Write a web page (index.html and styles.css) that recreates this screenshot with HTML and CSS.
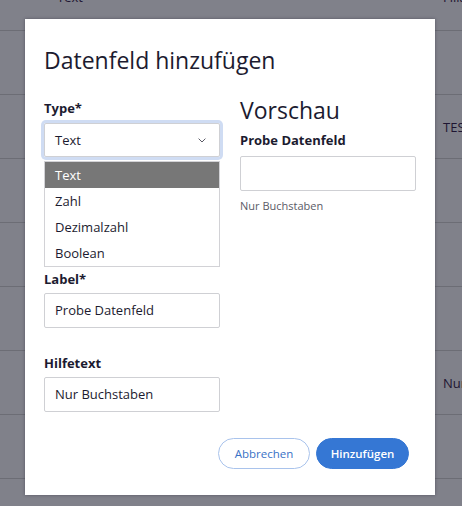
FILE: index.html
```html
<!DOCTYPE html>
<html lang="de">
<head>
<meta charset="utf-8">
<title>Datenfeld hinzufügen</title>
<link rel="stylesheet" href="styles.css">
</head>
<body>
<div class="backdrop">
  <div class="row row-first"><span class="cell">Text</span><span class="cell">Filiale</span></div>
  <div class="row"><span class="cell"></span><span class="cell"></span></div>
  <div class="row"><span class="cell"></span><span class="cell">TEST</span></div>
  <div class="row"><span class="cell"></span><span class="cell"></span></div>
  <div class="row"><span class="cell"></span><span class="cell"></span></div>
  <div class="row"><span class="cell"></span><span class="cell"></span></div>
  <div class="row"><span class="cell"></span><span class="cell">Nur Buchstaben</span></div>
  <div class="row"><span class="cell"></span><span class="cell"></span></div>
</div>

<div class="modal">
  <h2 class="modal-title">Datenfeld hinzufügen</h2>
  <div class="modal-body">
    <div class="col">
      <label class="field-label">Type*</label>
      <div class="select is-focused">
        <span class="select-value">Text</span>
        <svg class="chevron" width="8" height="5" viewBox="0 0 8 5"><path d="M0.6 0.6L4 4L7.4 0.6" fill="none" stroke="#5a5a66" stroke-width="1"/></svg>
      </div>
      <ul class="options">
        <li class="option is-selected">Text</li>
        <li class="option">Zahl</li>
        <li class="option">Dezimalzahl</li>
        <li class="option">Boolean</li>
      </ul>
      <label class="field-label label-after-list">Label*</label>
      <div class="input">Probe Datenfeld</div>
      <label class="field-label label-spaced">Hilfetext</label>
      <div class="input">Nur Buchstaben</div>
    </div>
    <div class="col">
      <h3 class="preview-title">Vorschau</h3>
      <label class="field-label preview-label">Probe Datenfeld</label>
      <div class="input preview-input"></div>
      <div class="help">Nur Buchstaben</div>
    </div>
  </div>
  <div class="modal-footer">
    <button class="btn btn-outline">Abbrechen</button>
    <button class="btn btn-primary">Hinzufügen</button>
  </div>
</div>
</body>
</html>
```

FILE: styles.css
```css
* { box-sizing: border-box; }

html, body {
  margin: 0;
  padding: 0;
}

body {
  width: 462px;
  height: 506px;
  overflow: hidden;
  position: relative;
  background: #80818a;
  font-family: "Open Sans", "Noto Sans", sans-serif;
  color: #1c1b30;
}

.backdrop {
  width: 462px;
}

.row {
  height: 64px;
  border-bottom: 1px solid #6c6d75;
  display: grid;
  grid-template-columns: 386px 200px;
  padding-left: 57px;
  align-items: center;
  font-size: 13px;
  line-height: 18px;
  color: #1e1532;
  white-space: nowrap;
}

.row-first {
  height: 31px;
  align-items: start;
}

.row-first .cell {
  margin-top: -12px;
}

.modal {
  position: absolute;
  left: 25px;
  top: 19px;
  width: 410px;
  height: 476px;
  background: #fff;
  box-shadow: 0 0 3px rgba(30, 30, 50, 0.45);
  padding: 26px 19px 26px 19px;
  display: flex;
  flex-direction: column;
}

.modal-title {
  margin: 0;
  font-size: 23px;
  line-height: 31px;
  font-weight: 400;
}

.modal-body {
  margin-top: 23px;
  display: grid;
  grid-template-columns: 176px 176px;
  column-gap: 20px;
  align-items: start;
}

.col {
  display: flex;
  flex-direction: column;
}

.field-label {
  font-size: 13px;
  line-height: 18px;
  font-weight: 700;
  display: block;
}

.select {
  margin-top: 6px;
  height: 34px;
  border: 1px solid #cfd0d4;
  border-radius: 2px;
  display: flex;
  align-items: center;
  justify-content: space-between;
  padding: 0 13px 0 10px;
  font-size: 13px;
}

.select.is-focused {
  box-shadow: 0 0 0 3px #cfdcf3;
}

.chevron {
  display: block;
}

.options {
  list-style: none;
  margin: 4px 0 0;
  padding: 0;
  border: 1px solid #d2d2d6;
}

.option {
  height: 26px;
  line-height: 26px;
  padding: 0 10px;
  font-size: 13px;
}

.option.is-selected {
  background: #777777;
  color: #fff;
}

.label-after-list {
  margin-top: 3px;
}

.label-spaced {
  margin-top: 26px;
}

.input {
  margin-top: 5px;
  height: 35px;
  border: 1px solid #cfd0d4;
  border-radius: 2px;
  padding: 0 10px;
  font-size: 13px;
  line-height: 33px;
}

.preview-title {
  margin: -4px 0 0;
  font-size: 23px;
  line-height: 30px;
  font-weight: 400;
}

.preview-label {
  margin-top: 6px;
}

.preview-input {
  margin-top: 7px;
}

.help {
  margin-top: 7px;
  font-size: 11px;
  line-height: 16px;
  color: #5b5b66;
}

.modal-footer {
  margin-top: auto;
  display: flex;
  justify-content: flex-end;
  gap: 6px;
  padding-right: 7px;
}

.btn {
  height: 31px;
  border-radius: 16px;
  font-family: "Open Sans", "Noto Sans", sans-serif;
  font-size: 11.5px;
  padding: 0;
  cursor: pointer;
}

.btn-outline {
  background: #fff;
  border: 1px solid #a9c3ec;
  color: #3a72c6;
  width: 92px;
}

.btn-primary {
  background: #3577d4;
  border: 1px solid #3577d4;
  color: #fff;
  font-weight: 600;
  width: 93px;
}
```
